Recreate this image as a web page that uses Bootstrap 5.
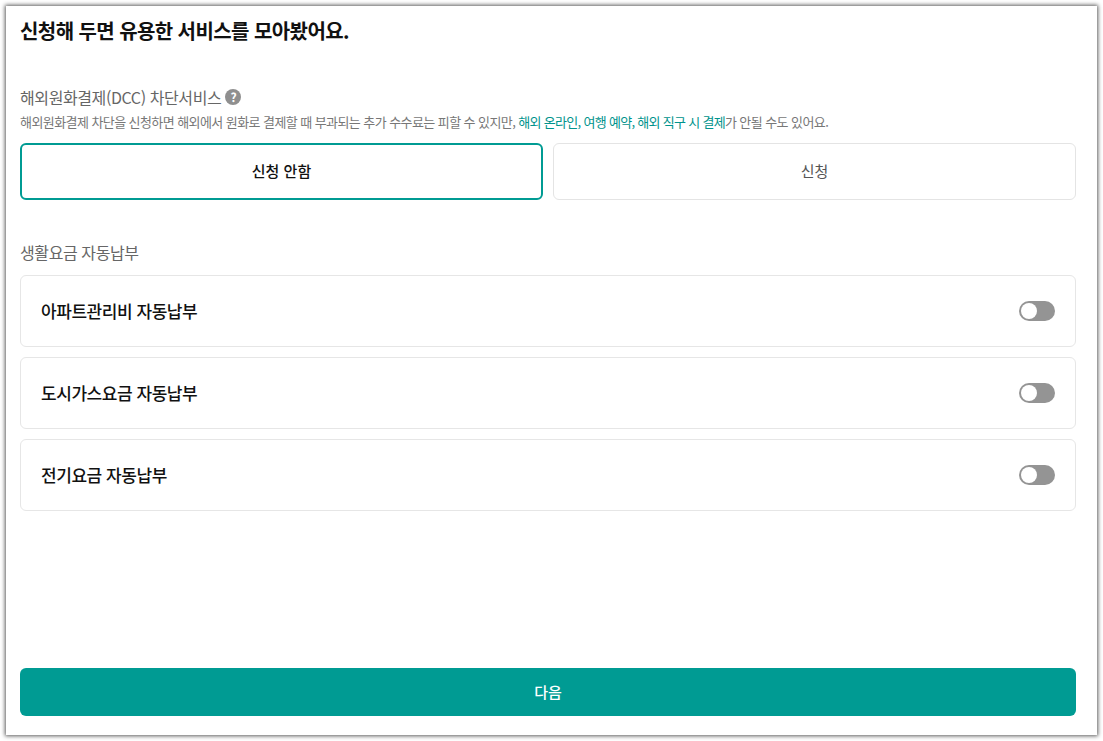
<!doctype html>
<html lang="ko">
<head>
<meta charset="utf-8">
<title>서비스 신청</title>
<link href="https://cdn.jsdelivr.net/npm/bootstrap@5.3.0/dist/css/bootstrap.min.css" rel="stylesheet">
<style>
html,body{height:100%;overflow:hidden;background:#fff}
body{font-family:"Noto Sans CJK KR","Noto Sans",sans-serif;color:#111;padding:6px 6px 6px 6px}
.shell{height:729px;background:#fff;box-shadow:0 0 4px 1px #5c5c5c;padding:0 21px 19px 14px}
.page-title{font-size:20px;font-weight:700;line-height:30px;margin:10px 0 0;letter-spacing:-.58px;color:#111}
.group-label{font-size:16px;line-height:22px;color:#666;letter-spacing:-.4px}
.first-group{margin-top:40px}
.help-dot{width:16px;height:16px;border-radius:50%;background:#8f8f8f;color:#fff;font-size:12px;font-weight:700;line-height:16px;text-align:center}
.note{font-size:13px;line-height:18px;color:#777;letter-spacing:-.575px;margin-top:5px}
.note b{font-weight:400;color:#00938c;letter-spacing:-.7px}
.choice-row{margin-top:12px;height:57px;gap:10px}
.choice{border:1px solid #e4e4e4;border-radius:6px;background:#fff;color:#555;font-size:15px;flex:1 1 50%;height:57px;padding:0}
.choice-on{border:2px solid #009b93;color:#111;font-weight:500}
.second-group{margin-top:41px}
.service-stack{margin-top:12px;gap:10px}
.service-item{height:72px;border:1px solid #e6e6e6;border-radius:6px;padding:0 20px;font-size:17px;font-weight:500;letter-spacing:-.45px;color:#111}
.toggle-off{width:36px;height:20px;border-radius:10px;background:#949494;padding:2px}
.toggle-knob{width:16px;height:16px;border-radius:50%;background:#fff}
.next-btn{height:48px;border-radius:6px;border:0;background:#009b93;color:#fff;font-size:15px;font-weight:500;padding:0}
.next-btn:hover{background:#008a83;color:#fff}
</style>
</head>
<body>
<main class="shell d-flex flex-column">
  <h1 class="page-title">신청해 두면 유용한 서비스를 모아봤어요.</h1>
  <div class="first-group">
    <div class="group-label d-flex align-items-center gap-1">해외원화결제(DCC) 차단서비스 <span class="help-dot">?</span></div>
    <p class="note mb-0">해외원화결제 차단을 신청하면 해외에서 원화로 결제할 때 부과되는 추가 수수료는 피할 수 있지만, <b>해외 온라인, 여행 예약, 해외 직구 시 결제</b>가 안될 수도 있어요.</p>
    <div class="choice-row d-flex">
      <button type="button" class="btn choice choice-on">신청 안함</button>
      <button type="button" class="btn choice">신청</button>
    </div>
  </div>
  <div class="second-group">
    <div class="group-label">생활요금 자동납부</div>
    <div class="service-stack d-flex flex-column">
      <div class="service-item d-flex align-items-center justify-content-between"><span>아파트관리비 자동납부</span><span class="toggle-off"><span class="toggle-knob d-block"></span></span></div>
      <div class="service-item d-flex align-items-center justify-content-between"><span>도시가스요금 자동납부</span><span class="toggle-off"><span class="toggle-knob d-block"></span></span></div>
      <div class="service-item d-flex align-items-center justify-content-between"><span>전기요금 자동납부</span><span class="toggle-off"><span class="toggle-knob d-block"></span></span></div>
    </div>
  </div>
  <button type="button" class="btn next-btn mt-auto w-100">다음</button>
</main>
<script src="https://cdn.jsdelivr.net/npm/bootstrap@5.3.0/dist/js/bootstrap.bundle.min.js"></script>
</body>
</html>
